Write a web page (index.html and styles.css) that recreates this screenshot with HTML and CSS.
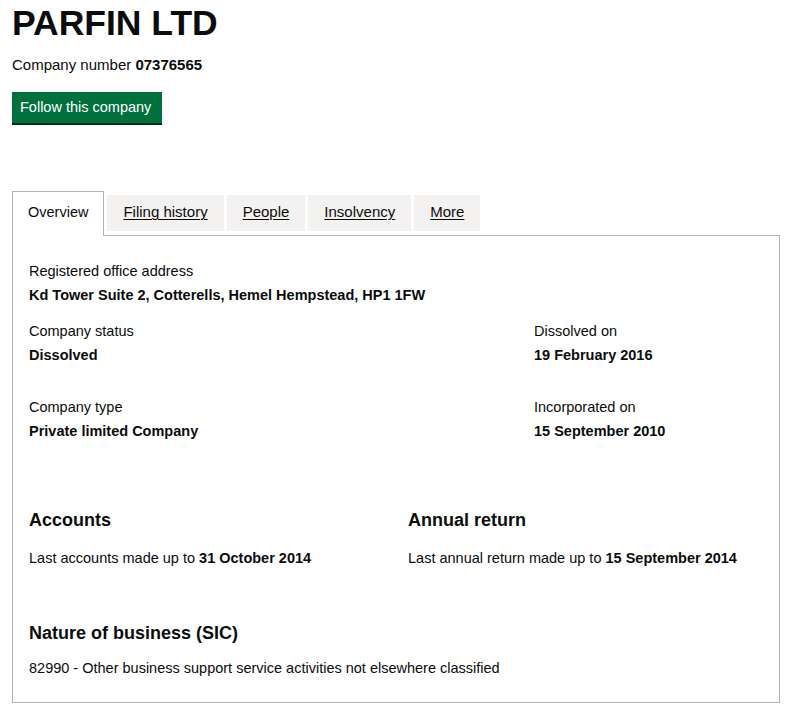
FILE: index.html
```html
<!DOCTYPE html>
<html>
<head>
  <meta charset="UTF-8">
  <title>PARFIN LTD - Overview</title>
  <link rel="stylesheet" href="styles.css">
</head>
<body>
  <div class="page">
    <h1 class="company-name">PARFIN LTD</h1>
    <p class="company-number">Company number <strong>07376565</strong></p>
    <a href="#" class="button">Follow this company</a>

    <ul class="tabs">
      <li class="tab selected">Overview</li>
      <li class="tab"><a href="#">Filing history</a></li>
      <li class="tab"><a href="#">People</a></li>
      <li class="tab"><a href="#">Insolvency</a></li>
      <li class="tab"><a href="#">More</a></li>
    </ul>

    <div class="panel">
      <dl class="details">
        <div class="item wide">
          <dt>Registered office address</dt>
          <dd>Kd Tower Suite 2, Cotterells, Hemel Hempstead, HP1 1FW</dd>
        </div>
        <div class="item row-status">
          <dt>Company status</dt>
          <dd>Dissolved</dd>
        </div>
        <div class="item row-status">
          <dt>Dissolved on</dt>
          <dd>19 February 2016</dd>
        </div>
        <div class="item row-type">
          <dt>Company type</dt>
          <dd>Private limited Company</dd>
        </div>
        <div class="item row-type">
          <dt>Incorporated on</dt>
          <dd>15 September 2010</dd>
        </div>
      </dl>

      <div class="filings">
        <div>
          <h2>Accounts</h2>
          <p>Last accounts made up to <strong>31 October 2014</strong></p>
        </div>
        <div>
          <h2>Annual return</h2>
          <p>Last annual return made up to <strong>15 September 2014</strong></p>
        </div>
      </div>

      <div class="sic">
        <h2>Nature of business (SIC)</h2>
        <p>82990 - Other business support service activities not elsewhere classified</p>
      </div>
    </div>
  </div>
</body>
</html>
```

FILE: styles.css
```css
:root {
  --text: #0b0c0c;
  --border: #b1b4b6;
  --tab-bg: #f3f2f1;
  --green: #00703c;
  --green-shadow: #002d18;
}

body {
  margin: 0;
  font-family: "Liberation Sans", Arial, sans-serif;
  font-size: 14.5px;
  line-height: 24px;
  color: var(--text);
  background: #fff;
}

.page {
  width: 768px;
  padding-left: 12px;
}

.company-name {
  margin: 3px 0 0;
  font-size: 35.5px;
  line-height: 40px;
  font-weight: 700;
}

.company-number {
  margin: 12px 0 0;
  font-size: 15px;
  line-height: 20px;
}

.button {
  display: inline-block;
  margin-top: 17px;
  padding: 6px 11px 6px 8px;
  font-size: 14.5px;
  line-height: 19px;
  color: #fff;
  text-decoration: none;
  background: var(--green);
  box-shadow: 0 2px 0 var(--green-shadow);
}

.tabs {
  display: flex;
  align-items: flex-start;
  list-style: none;
  margin: 68px 0 0;
  padding: 0;
  height: 44px;
}

.tab {
  margin: 4px 3px 0 0;
  padding: 7px 16px 9px;
  font-size: 15px;
  line-height: 20px;
  background: var(--tab-bg);
}

.tab a {
  color: var(--text);
  text-decoration: underline;
  text-underline-offset: 2px;
  text-decoration-thickness: 1px;
}

.tab.selected {
  margin-top: 0;
  padding: 10px 15px 14px;
  font-size: 14.5px;
  border: 1px solid var(--border);
  border-bottom: 0;
  background: #fff;
}

.panel {
  border: 1px solid var(--border);
  padding: 23px 16px 22px;
}

.details {
  display: grid;
  grid-template-columns: 505px 1fr;
  margin: 0;
}

.item dt {
  margin: 0;
}

.item dd {
  margin: 0;
  font-weight: 700;
}

.wide {
  grid-column: 1 / -1;
}

.row-status {
  margin-top: 12px;
}

.row-type {
  margin-top: 28px;
}

h2 {
  margin: 0;
  font-size: 18px;
  line-height: 24px;
  font-weight: 700;
}

.filings {
  display: grid;
  grid-template-columns: 379px 1fr;
  margin-top: 65px;
}

.filings p {
  margin: 14px 0 0;
}

.sic {
  margin-top: 51px;
}

.sic p {
  margin: 11px 0 0;
}
```
